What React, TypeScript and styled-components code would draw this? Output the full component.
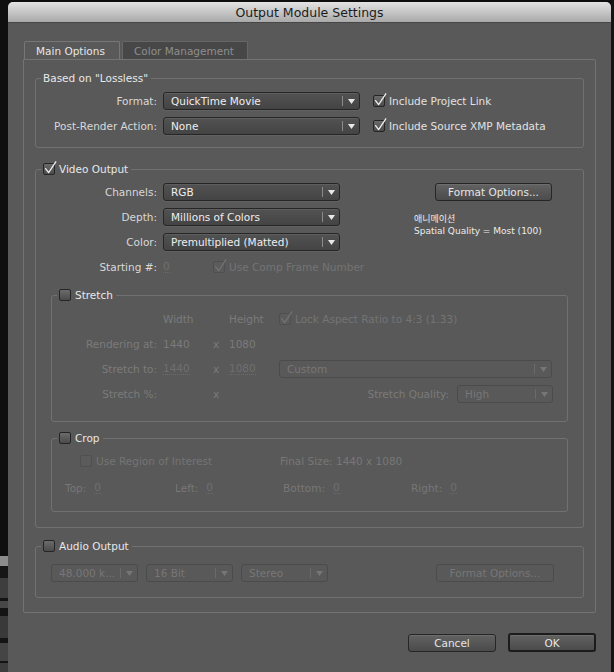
import React from 'react';
import styled, { createGlobalStyle, css } from 'styled-components';

const UI_FONT = `"DejaVu Sans", "Noto Sans", sans-serif`;

const GlobalStyle = createGlobalStyle`
  html, body {
    margin: 0;
    padding: 0;
    background: #0e0e0e;
  }
  body {
    font-family: ${UI_FONT};
    font-size: 10.5px;
    color: #dcdcdc;
  }
  * {
    box-sizing: border-box;
  }
`;

const Screen = styled.div`
  display: flex;
  width: 614px;
  height: 672px;
  overflow: hidden;
  background: #0e0e0e;
`;

const BackStrip = styled.div<{ $w: number }>`
  width: ${(p) => p.$w}px;
  flex: none;
  display: flex;
  flex-direction: column;
`;

const Band = styled.div<{ $h: number; $c: string }>`
  flex: none;
  height: ${(p) => p.$h}px;
  background: ${(p) => p.$c};
`;

const Window = styled.div`
  width: 603px;
  flex: none;
  margin-top: 2px;
  display: flex;
  flex-direction: column;
  background: #595959;
  border-radius: 5px 5px 0 0;
`;

const TitleBar = styled.div`
  height: 21px;
  display: flex;
  align-items: center;
  justify-content: center;
  background: linear-gradient(#e3e3e3, #a9a9a9);
  border-radius: 5px 5px 0 0;
  border-bottom: 1px solid #474747;
  font-size: 12.5px;
  color: #1c1c1c;
`;

const Body = styled.div`
  padding: 18px 15px 0 15px;
`;

const TabRow = styled.div`
  display: flex;
  gap: 2px;
  padding-left: 1px;
  height: 18px;
`;

const Tab = styled.div<{ $active?: boolean; $w: number }>`
  width: ${(p) => p.$w}px;
  height: 18px;
  padding: 0 11px;
  display: flex;
  align-items: center;
  border: 1px solid ${(p) => (p.$active ? '#777777' : '#666666')};
  border-bottom: none;
  border-radius: 2px 2px 0 0;
  background: ${(p) => (p.$active ? '#595959' : '#474747')};
  color: ${(p) => (p.$active ? '#e6e6e6' : '#8e8e8e')};
  white-space: nowrap;
`;

const Panel = styled.div`
  border: 1px solid #737373;
  border-radius: 0 2px 2px 2px;
  padding: 11px 11px 14px 11px;
`;

const Group = styled.fieldset<{ $inset?: boolean; $top: number; $bottom?: number }>`
  margin: ${(p) => p.$top}px ${(p) => (p.$inset ? '15px' : '0')} 0;
  padding: 0 0 ${(p) => p.$bottom ?? 0}px;
  min-width: 0;
  border: 1px solid #717171;
  border-radius: 3px;
`;

const Legend = styled.legend`
  margin-left: 5px;
  padding: 0 3px 0 2px;
  height: 14px;
  display: flex;
  align-items: center;
  gap: 4px;
  line-height: 14px;
  color: #e8e8e8;
`;

const BasedGrid = styled.div`
  display: grid;
  grid-template-columns: 121px 197px auto;
  grid-auto-rows: 18px;
  column-gap: 6px;
  row-gap: 7px;
  align-items: center;
  padding: 7px 0 12px;
`;

const RowLabel = styled.span<{ $dim?: boolean; $pad?: number }>`
  text-align: right;
  white-space: nowrap;
  padding-right: ${(p) => p.$pad ?? 0}px;
  color: ${(p) => (p.$dim ? '#7b7b7b' : '#d8d8d8')};
`;

const CheckLine = styled.label<{ $dim?: boolean; $indent?: number }>`
  display: flex;
  align-items: center;
  gap: 4px;
  white-space: nowrap;
  margin-left: ${(p) => p.$indent ?? 0}px;
  color: ${(p) => (p.$dim ? '#747474' : '#e2e2e2')};
`;

const BoxShell = styled.span<{ $disabled?: boolean }>`
  position: relative;
  flex: none;
  width: 12px;
  height: 12px;
  border: 1px solid ${(p) => (p.$disabled ? '#4f4f4f' : '#252525')};
  border-radius: 2px;
  background: ${(p) => (p.$disabled ? '#5b5b5b' : 'linear-gradient(#6b6b6b, #4b4b4b)')};
  svg {
    position: absolute;
    left: 0;
    top: -3px;
    overflow: visible;
  }
`;

function Checkbox({ checked, disabled }: { checked?: boolean; disabled?: boolean }) {
  return (
    <BoxShell $disabled={disabled}>
      {checked && (
        <svg width="13" height="14" viewBox="0 0 13 14">
          <path
            d="M1.6 7.6 L4.6 11.6 L11.8 0.8"
            fill="none"
            stroke={disabled ? '#727272' : '#eeeeee'}
            strokeWidth="1.3"
            strokeLinecap="round"
            strokeLinejoin="round"
          />
        </svg>
      )}
    </BoxShell>
  );
}

const SelectShell = styled.div<{ $w: number; $disabled?: boolean }>`
  width: ${(p) => p.$w}px;
  height: 18px;
  display: flex;
  align-items: center;
  border: 1px solid #262626;
  border-radius: 3px;
  background: linear-gradient(#525252, #444444);
  box-shadow: inset 0 1px 0 rgba(255, 255, 255, 0.07), 0 1px 0 rgba(255, 255, 255, 0.05);
  color: #eeeeee;
  ${(p) =>
    p.$disabled &&
    css`
      border-color: #4b4b4b;
      background: #595959;
      box-shadow: none;
      color: #777777;
    `}
`;

const SelectText = styled.span`
  flex: 1;
  min-width: 0;
  padding-left: 7px;
  white-space: nowrap;
  overflow: hidden;
`;

const SelectDivider = styled.span<{ $disabled?: boolean }>`
  flex: none;
  width: 1px;
  height: 10px;
  background: ${(p) => (p.$disabled ? '#6a6a6a' : '#8a8a8a')};
`;

const SelectArrow = styled.span`
  flex: none;
  width: 16px;
  display: flex;
  align-items: center;
  justify-content: center;
`;

function Select({ value, w, disabled }: { value: string; w: number; disabled?: boolean }) {
  return (
    <SelectShell $w={w} $disabled={disabled}>
      <SelectText>{value}</SelectText>
      <SelectDivider $disabled={disabled} />
      <SelectArrow>
        <svg width="7" height="5" viewBox="0 0 7 5">
          <path d="M0 0 H7 L3.5 5 Z" fill={disabled ? '#767676' : '#e8e8e8'} />
        </svg>
      </SelectArrow>
    </SelectShell>
  );
}

const Button = styled.button<{ $w: number; $default?: boolean; $left?: number }>`
  width: ${(p) => p.$w}px;
  height: ${(p) => (p.$default ? 19 : 18)}px;
  margin: 0 0 0 ${(p) => p.$left ?? 0}px;
  padding: 0;
  font-family: ${UI_FONT};
  font-size: 10.5px;
  color: #e6e6e6;
  border: ${(p) => (p.$default ? '2px solid #1c1c1c' : '1px solid #262626')};
  border-radius: 3px;
  background: linear-gradient(#626262, #4b4b4b);
  box-shadow: inset 0 1px 0 rgba(255, 255, 255, 0.08);
  &:disabled {
    color: #777777;
    border-color: #4b4b4b;
    background: #595959;
    box-shadow: none;
  }
`;

const VideoTop = styled.div`
  display: flex;
  align-items: flex-start;
  padding-top: 7px;
`;

const VideoGrid = styled.div`
  display: grid;
  grid-template-columns: 121px 177px;
  grid-auto-rows: 18px;
  column-gap: 6px;
  row-gap: 7px;
  align-items: center;
`;

const StartCell = styled.div`
  display: flex;
  align-items: center;
`;

const Slot = styled.span<{ $w?: number }>`
  display: inline-flex;
  width: ${(p) => (p.$w ? `${p.$w}px` : 'auto')};
  flex: none;
  white-space: nowrap;
`;

const Field = styled.span`
  color: #6f6f6f;
  border-bottom: 1px dotted #6c6c6c;
  line-height: 11px;
`;

const InfoColumn = styled.div`
  margin-left: 74px;
  display: flex;
  flex-direction: column;
`;

const InfoText = styled.div`
  margin-top: 12px;
  font-size: 9px;
  line-height: 12px;
  color: #ececec;
  span {
    font-family: "Noto Sans CJK KR", ${UI_FONT};
  }
`;

const StretchGrid = styled.div`
  display: grid;
  grid-template-columns: 111px 50px 16px 50px 1fr;
  grid-auto-rows: 18px;
  row-gap: 7px;
  align-items: center;
  padding: 8px 14px 18px 0;
  color: #7b7b7b;
`;

const QualityCell = styled.div`
  display: flex;
  justify-content: flex-end;
  align-items: center;
  gap: 8px;
`;

const CropBody = styled.div`
  display: flex;
  flex-direction: column;
  gap: 9px;
  padding: 7px 0 14px;
  color: #777777;
`;

const CropRow = styled.div<{ $indent: number }>`
  display: flex;
  align-items: center;
  height: 18px;
  padding-left: ${(p) => p.$indent}px;
`;

const CropCell = styled.span<{ $w?: number }>`
  display: flex;
  align-items: center;
  gap: 8px;
  flex: none;
  width: ${(p) => (p.$w ? `${p.$w}px` : 'auto')};
  white-space: nowrap;
`;

const AudioRow = styled.div`
  display: flex;
  align-items: center;
  gap: 8px;
  padding: 11px 0 15px 15px;
`;

const FooterRow = styled.div`
  display: flex;
  justify-content: flex-end;
  align-items: center;
  gap: 12px;
  margin-top: 20px;
`;

const leftBands: [number, string][] = [
  [556, '#0f0f0f'],
  [10, '#8c8c8c'],
  [12, '#161616'],
  [20, '#3e3e3e'],
  [3, '#141414'],
  [7, '#474747'],
  [8, '#141414'],
  [22, '#393939'],
  [5, '#141414'],
  [18, '#454545'],
  [2, '#141414'],
  [20, '#3d3d3d'],
];

export default function App() {
  return (
    <>
      <GlobalStyle />
      <Screen>
        <BackStrip $w={8}>
          {leftBands.map(([h, c], i) => (
            <Band key={i} $h={h} $c={c} />
          ))}
        </BackStrip>

        <Window>
          <TitleBar>Output Module Settings</TitleBar>
          <Body>
            <TabRow>
              <Tab $active $w={96}>
                Main Options
              </Tab>
              <Tab $w={126}>Color Management</Tab>
            </TabRow>

            <Panel>
              <Group $top={0}>
                <Legend>Based on "Lossless"</Legend>
                <BasedGrid>
                  <RowLabel>Format:</RowLabel>
                  <Select value="QuickTime Movie" w={197} />
                  <CheckLine $indent={7}>
                    <Checkbox checked />
                    Include Project Link
                  </CheckLine>
                  <RowLabel>Post-Render Action:</RowLabel>
                  <Select value="None" w={197} />
                  <CheckLine $indent={7}>
                    <Checkbox checked />
                    Include Source XMP Metadata
                  </CheckLine>
                </BasedGrid>
              </Group>

              <Group $top={14} $bottom={15}>
                <Legend>
                  <Checkbox checked />
                  Video Output
                </Legend>
                <VideoTop>
                  <VideoGrid>
                    <RowLabel>Channels:</RowLabel>
                    <Select value="RGB" w={177} />
                    <RowLabel>Depth:</RowLabel>
                    <Select value="Millions of Colors" w={177} />
                    <RowLabel>Color:</RowLabel>
                    <Select value="Premultiplied (Matted)" w={177} />
                    <RowLabel>Starting #:</RowLabel>
                    <StartCell>
                      <Slot $w={50}>
                        <Field>0</Field>
                      </Slot>
                      <CheckLine $dim>
                        <Checkbox checked disabled />
                        Use Comp Frame Number
                      </CheckLine>
                    </StartCell>
                  </VideoGrid>
                  <InfoColumn>
                    <Button $w={117} $left={21}>
                      Format Options...
                    </Button>
                    <InfoText>
                      <span>애니메이션</span>
                      <br />
                      Spatial Quality = Most (100)
                    </InfoText>
                  </InfoColumn>
                </VideoTop>

                <Group $top={12} $inset>
                  <Legend>
                    <Checkbox />
                    Stretch
                  </Legend>
                  <StretchGrid>
                    <span />
                    <Slot>Width</Slot>
                    <span />
                    <Slot>Height</Slot>
                    <CheckLine $dim>
                      <Checkbox checked disabled />
                      Lock Aspect Ratio to 4:3 (1.33)
                    </CheckLine>

                    <RowLabel $dim $pad={6}>Rendering at:</RowLabel>
                    <Slot>1440</Slot>
                    <Slot>x</Slot>
                    <Slot>1080</Slot>
                    <span />

                    <RowLabel $dim $pad={6}>Stretch to:</RowLabel>
                    <Slot>
                      <Field>1440</Field>
                    </Slot>
                    <Slot>x</Slot>
                    <Slot>
                      <Field>1080</Field>
                    </Slot>
                    <Select value="Custom" w={273} disabled />

                    <RowLabel $dim $pad={6}>Stretch %:</RowLabel>
                    <span />
                    <Slot>x</Slot>
                    <span />
                    <QualityCell>
                      Stretch Quality:
                      <Select value="High" w={96} disabled />
                    </QualityCell>
                  </StretchGrid>
                </Group>

                <Group $top={9} $inset>
                  <Legend>
                    <Checkbox />
                    Crop
                  </Legend>
                  <CropBody>
                    <CropRow $indent={28}>
                      <CropCell $w={200}>
                        <CheckLine $dim>
                          <Checkbox disabled />
                          Use Region of Interest
                        </CheckLine>
                      </CropCell>
                      <CropCell>Final Size: 1440 x 1080</CropCell>
                    </CropRow>
                    <CropRow $indent={13}>
                      <CropCell $w={110}>
                        Top: <Field>0</Field>
                      </CropCell>
                      <CropCell $w={108}>
                        Left: <Field>0</Field>
                      </CropCell>
                      <CropCell $w={128}>
                        Bottom: <Field>0</Field>
                      </CropCell>
                      <CropCell>
                        Right: <Field>0</Field>
                      </CropCell>
                    </CropRow>
                  </CropBody>
                </Group>
              </Group>

              <Group $top={11}>
                <Legend>
                  <Checkbox />
                  Audio Output
                </Legend>
                <AudioRow>
                  <Select value="48.000 k..." w={87} disabled />
                  <Select value="16 Bit" w={87} disabled />
                  <Select value="Stereo" w={87} disabled />
                  <Button $w={118} $left={100} disabled>
                    Format Options...
                  </Button>
                </AudioRow>
              </Group>
            </Panel>

            <FooterRow>
              <Button $w={88}>Cancel</Button>
              <Button $w={88} $default>
                OK
              </Button>
            </FooterRow>
          </Body>
        </Window>

        <BackStrip $w={3}>
          <Band $h={672} $c="#141414" />
        </BackStrip>
      </Screen>
    </>
  );
}
